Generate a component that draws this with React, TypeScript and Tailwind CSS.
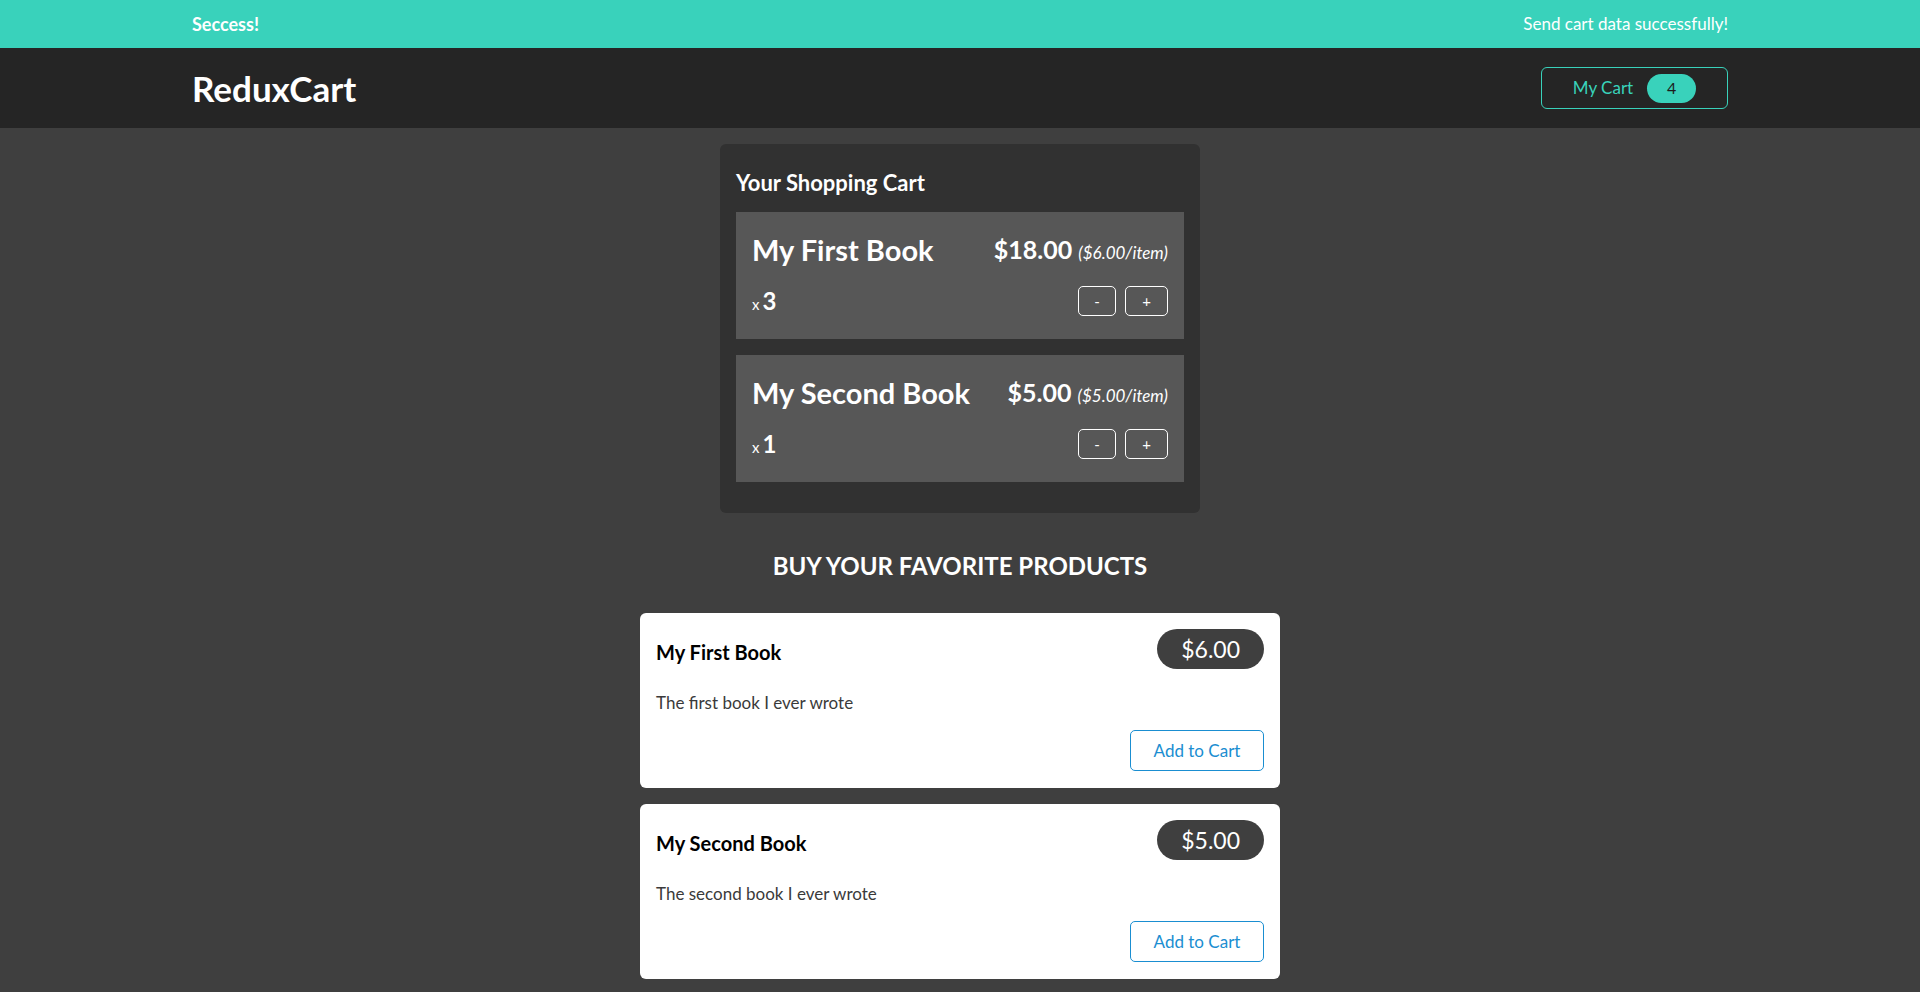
import React from "react";

const cartItems = [
  { title: "My First Book", quantity: 3, total: 18, price: 6 },
  { title: "My Second Book", quantity: 1, total: 5, price: 5 },
];

const products = [
  { title: "My First Book", price: 6, description: "The first book I ever wrote" },
  { title: "My Second Book", price: 5, description: "The second book I ever wrote" },
];

function CartItem({ title, quantity, total, price }: (typeof cartItems)[number]) {
  return (
    <li className="bg-[#575757] px-4 pt-[18px] pb-[23px] text-white">
      <header className="flex h-[40px] items-center justify-between">
        <h3 className="text-[29px] font-bold">{title}</h3>
        <div className="text-[25px] font-bold">
          ${total.toFixed(2)}
          <span className="ml-[6px] text-[17px] font-normal italic">(${price.toFixed(2)}/item)</span>
        </div>
      </header>
      <div className="mt-[16px] flex h-[30px] items-center justify-between">
        <div className="flex items-baseline">
          <span className="text-[15px]">x</span>
          <span className="ml-[3px] text-[24px] font-bold">{quantity}</span>
        </div>
        <div className="flex gap-[9px]">
          <button className="h-[30px] w-[38px] rounded-[5px] border border-white text-[15px] leading-none">-</button>
          <button className="h-[30px] w-[43px] rounded-[5px] border border-white text-[15px] leading-none">+</button>
        </div>
      </div>
    </li>
  );
}

function ProductItem({ title, price, description }: (typeof products)[number]) {
  return (
    <li className="rounded-md bg-white px-4 pt-4 pb-[17px]">
      <header className="flex h-[40px] items-center justify-between">
        <h3 className="pt-[6px] text-[20px] font-bold text-black">{title}</h3>
        <div className="flex h-[40px] items-center rounded-full bg-[#3f3f3f] px-6 text-[23px] text-white">
          ${price.toFixed(2)}
        </div>
      </header>
      <p className="mt-[22px] text-[17px] leading-6 text-[#3a3a3a]">{description}</p>
      <div className="mt-[15px] flex justify-end">
        <button className="h-[41px] w-[134px] rounded-[5px] border border-[#1a8ed1] text-[17px] text-[#1a8ed1]">
          Add to Cart
        </button>
      </div>
    </li>
  );
}

export default function App() {
  return (
    <div className="min-h-screen bg-[#3f3f3f] font-['Lato',sans-serif]">
      {/* Notification */}
      <section className="flex h-[48px] items-center justify-between bg-[#39d2bb] px-[10%] text-[17px] text-white">
        <h2 className="text-[18px] font-bold">Seccess!</h2>
        <p>Send cart data successfully!</p>
      </section>

      {/* Header */}
      <header className="flex h-[80px] items-center justify-between bg-[#252525] px-[10%]">
        <h1 className="text-[35px] font-bold text-white">ReduxCart</h1>
        <button className="flex h-[42px] w-[187px] items-center justify-center gap-[14px] rounded-md border border-[#39d2bb] text-[17px] text-[#39d2bb]">
          <span>My Cart</span>
          <span className="flex h-[29px] w-[49px] items-center justify-center rounded-full bg-[#39d2bb] text-[16px] text-[#1d1d1d]">
            4
          </span>
        </button>
      </header>

      <main className="flex flex-col items-center pb-12">
        {/* Cart */}
        <section className="mt-[16px] w-[480px] rounded-md bg-[#313131] px-4 pt-[24px] pb-[31px]">
          <h2 className="text-[22px] leading-[29px] font-bold text-white">Your Shopping Cart</h2>
          <ul className="mt-[15px] flex flex-col gap-4">
            {cartItems.map((item) => (
              <CartItem key={item.title} {...item} />
            ))}
          </ul>
        </section>

        {/* Products */}
        <section className="mt-[37px] w-[640px]">
          <h2 className="text-center text-[24px] leading-[32px] font-bold text-white">BUY YOUR FAVORITE PRODUCTS</h2>
          <ul className="mt-[31px] flex flex-col gap-4">
            {products.map((p) => (
              <ProductItem key={p.title} {...p} />
            ))}
          </ul>
        </section>
      </main>
    </div>
  );
}
